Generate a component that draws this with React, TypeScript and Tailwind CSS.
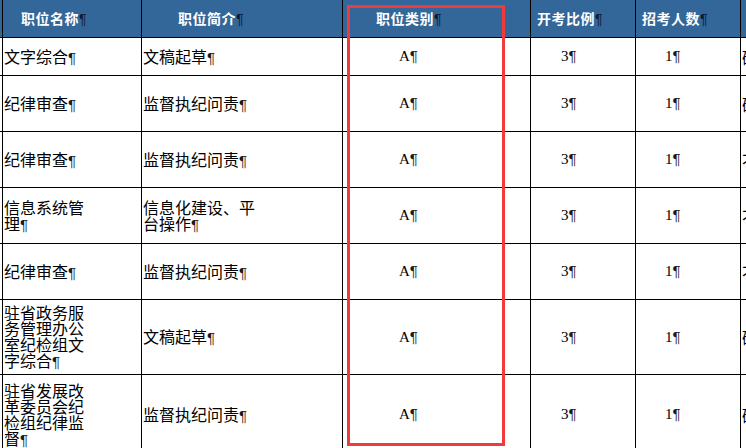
import type { ReactNode } from 'react'

type Row = {
  name: string
  intro: string
  kind: string
  ratio: string
  count: string
  edu: string
  height: string
}

const rows: Row[] = [
  { name: '文字综合', intro: '文稿起草', kind: 'A', ratio: '3', count: '1', edu: '硕', height: 'h-[38px]' },
  { name: '纪律审查', intro: '监督执纪问责', kind: 'A', ratio: '3', count: '1', edu: '硕', height: 'h-[56px]' },
  { name: '纪律审查', intro: '监督执纪问责', kind: 'A', ratio: '3', count: '1', edu: '不', height: 'h-[56px]' },
  { name: '信息系统管理', intro: '信息化建设、平台操作', kind: 'A', ratio: '3', count: '1', edu: '不', height: 'h-[56px]' },
  { name: '纪律审查', intro: '监督执纪问责', kind: 'A', ratio: '3', count: '1', edu: '不', height: 'h-[56px]' },
  { name: '驻省政务服务管理办公室纪检组文字综合', intro: '文稿起草', kind: 'A', ratio: '3', count: '1', edu: '硕', height: 'h-[75px]' },
  { name: '驻省发展改革委员会纪检组纪律监督', intro: '监督执纪问责', kind: 'A', ratio: '3', count: '1', edu: '硕', height: 'h-[80px]' },
]

const cjk = "font-['Noto_Sans_CJK_SC',sans-serif]"

function Mark({ header = false }: { header?: boolean }) {
  return (
    <span
      className={
        header
          ? "font-['Liberation_Sans',sans-serif] text-[14px] font-normal text-[#0d1a33]"
          : "font-['Liberation_Sans',sans-serif] text-[15px] text-[#1a1a1a]"
      }
    >
      ¶
    </span>
  )
}

function HeadCell({ width, pad, children }: { width: string; pad: string; children?: ReactNode }) {
  return (
    <div className={`${width} ${pad} flex h-full shrink-0 items-center border-l border-black`}>
      {children && (
        <span className={`${cjk} text-[14px] font-bold tracking-[0.5px] text-white`}>
          {children}
          <Mark header />
        </span>
      )}
    </div>
  )
}

function Cell({ width, pad, children }: { width: string; pad: string; children: ReactNode }) {
  return (
    <div className={`${width} ${pad} flex h-full shrink-0 items-center border-l border-black`}>
      {children}
    </div>
  )
}

export default function App() {
  return (
    <div className="relative h-[448px] w-[746px] overflow-hidden bg-white">
      <div className="flex h-[38px] border-b border-black bg-[#336699]">
        <div className="w-[2px] shrink-0" />
        <HeadCell width="w-[139px]" pad="pl-[18px]">职位名称</HeadCell>
        <HeadCell width="w-[201px]" pad="pl-[36px]">职位简介</HeadCell>
        <HeadCell width="w-[188px]" pad="pl-[33px]">职位类别</HeadCell>
        <HeadCell width="w-[105px]" pad="pl-[6px]">开考比例</HeadCell>
        <HeadCell width="w-[105px]" pad="pl-[6px]">招考人数</HeadCell>
        <HeadCell width="w-[60px]" pad="pl-[40px]" />
      </div>

      {rows.map((row, index) => (
        <div key={index} className={`${row.height} flex border-b border-black`}>
          <div className="w-[2px] shrink-0" />
          <Cell width="w-[139px]" pad="pl-[1px]">
            <p className={`${cjk} w-[82px] text-[16px] leading-[16px] text-black`}>
              {row.name}
              <Mark />
            </p>
          </Cell>
          <Cell width="w-[201px]" pad="pl-[1px]">
            <p className={`${cjk} w-[114px] text-[16px] leading-[16px] text-black`}>
              {row.intro}
              <Mark />
            </p>
          </Cell>
          <Cell width="w-[188px]" pad="pl-[56px]">
            <span className="font-['Liberation_Serif',serif] text-[15px] font-normal text-black">
              {row.kind}
              <Mark />
            </span>
          </Cell>
          <Cell width="w-[105px]" pad="pl-[30px]">
            <span className="font-['Liberation_Serif',serif] text-[15px] font-normal text-black">
              {row.ratio}
              <Mark />
            </span>
          </Cell>
          <Cell width="w-[105px]" pad="pl-[29px]">
            <span className="font-['Liberation_Serif',serif] text-[15px] font-normal text-black">
              {row.count}
              <Mark />
            </span>
          </Cell>
          <Cell width="w-[60px]" pad="pl-[1px]">
            <span className={`${cjk} text-[16px] text-black`}>{row.edu}</span>
          </Cell>
        </div>
      ))}

      <div className="pointer-events-none absolute left-[347px] top-[5px] h-[441px] w-[158px] border-[3px] border-[#ef3b3b]" />
    </div>
  )
}
